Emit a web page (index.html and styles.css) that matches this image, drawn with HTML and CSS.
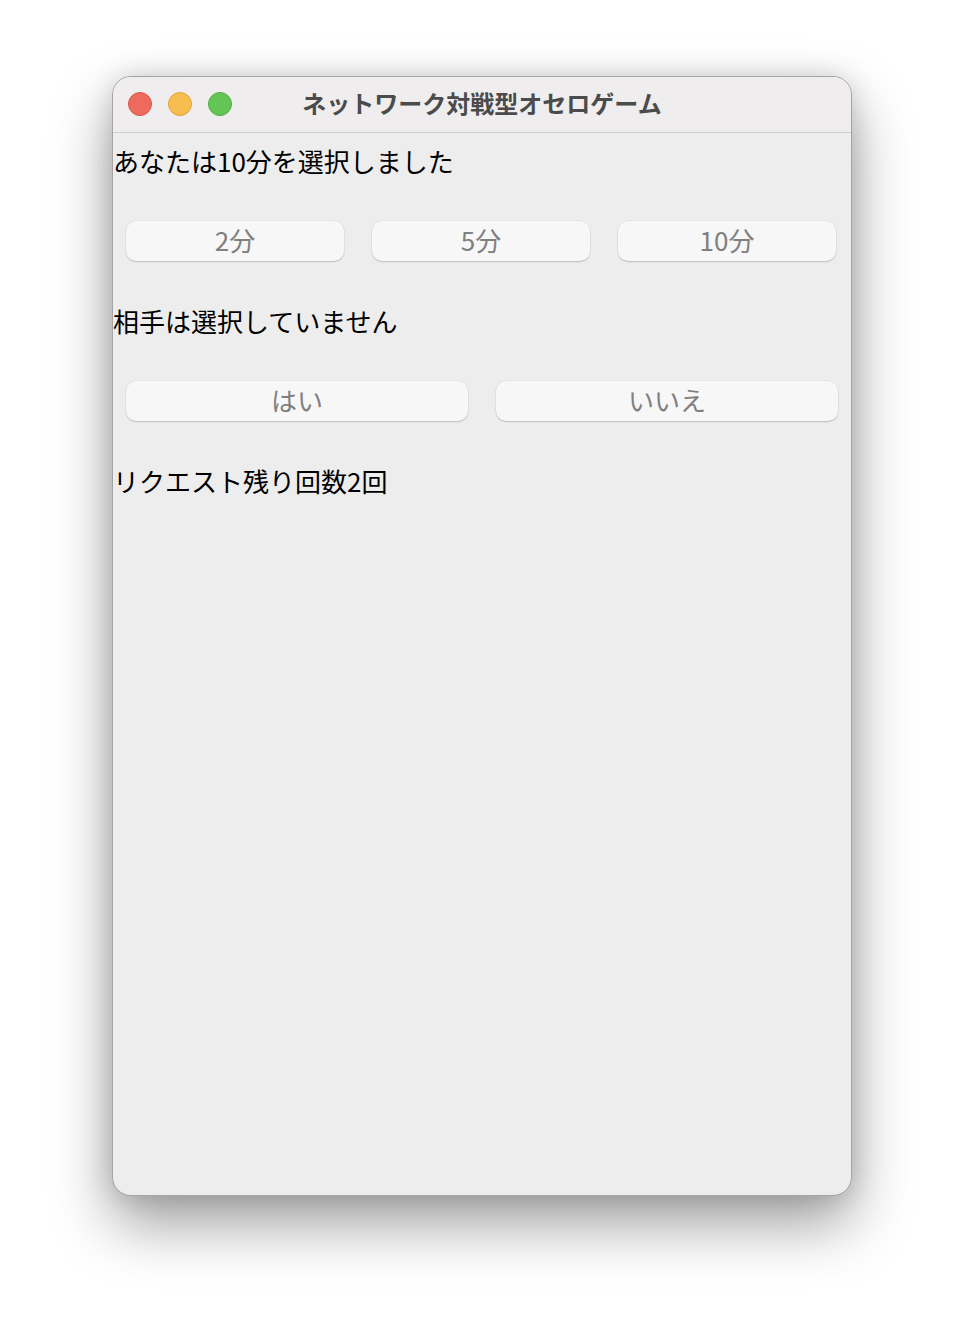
FILE: index.html
```html
<!DOCTYPE html>
<html lang="ja">
<head>
<meta charset="utf-8">
<title>ネットワーク対戦型オセロゲーム</title>
<link rel="stylesheet" href="styles.css">
</head>
<body>
<div class="window">
  <div class="titlebar">
    <div class="lights">
      <span class="light red"></span>
      <span class="light yellow"></span>
      <span class="light green"></span>
    </div>
    <div class="title">ネットワーク対戦型オセロゲーム</div>
    <div></div>
  </div>
  <div class="content">
    <div class="label l1">あなたは10分を選択しました</div>
    <div class="row row3">
      <div class="btn">2分</div>
      <div class="btn">5分</div>
      <div class="btn">10分</div>
    </div>
    <div class="label">相手は選択していません</div>
    <div class="row row2">
      <div class="btn">はい</div>
      <div class="btn">いいえ</div>
    </div>
    <div class="label">リクエスト残り回数2回</div>
  </div>
</div>
</body>
</html>
```
FILE: styles.css
```css
* { box-sizing: border-box; }
html, body { margin: 0; padding: 0; background: #ffffff; }
body {
  height: 1344px;
  padding: 76px 112px 0;
  overflow: hidden;
  font-family: "Noto Sans CJK JP", "Noto Sans", sans-serif;
}
.window {
  width: 740px;
  height: 1120px;
  border: 1px solid #a4a4a4;
  border-radius: 19px;
  overflow: hidden;
  background: #ededed;
  box-shadow: 0 28px 60px rgba(0,0,0,0.38), 0 0 26px rgba(0,0,0,0.14);
}
.titlebar {
  height: 56px;
  background: #efeded;
  border-bottom: 1px solid #cfcfcf;
  display: grid;
  grid-template-columns: 1fr auto 1fr;
  align-items: center;
}
.lights {
  display: flex;
  gap: 16px;
  padding-left: 15px;
  padding-bottom: 1px;
}
.light {
  width: 24px;
  height: 24px;
  border-radius: 50%;
}
.red { background: #ee6a5e; border: 1px solid #d8554a; }
.yellow { background: #f6be4f; border: 1px solid #dea33c; }
.green { background: #62c554; border: 1px solid #4fac42; }
.title {
  font-size: 24px;
  font-weight: 700;
  color: #4b4b4b;
  line-height: 1;
  padding-bottom: 4px;
}
.content {
  display: flex;
  flex-direction: column;
}
.label {
  height: 60px;
  line-height: 58px;
  font-size: 26px;
  color: #000;
  white-space: nowrap;
}
.l1 { height: 58px; line-height: 56px; }
.row {
  display: grid;
  gap: 28px;
  padding: 30px 0 31px 13px;
}
.row3 { grid-template-columns: repeat(3, 218px); }
.row2 { grid-template-columns: repeat(2, 342px); padding-top: 29px; }
.btn {
  height: 40px;
  background: #f7f7f7;
  border-radius: 10px;
  box-shadow: 0 1px 1.5px rgba(0,0,0,0.18), 0 0 0 0.5px rgba(0,0,0,0.05);
  color: #808080;
  font-size: 26px;
  line-height: 38px;
  text-align: center;
}
```
